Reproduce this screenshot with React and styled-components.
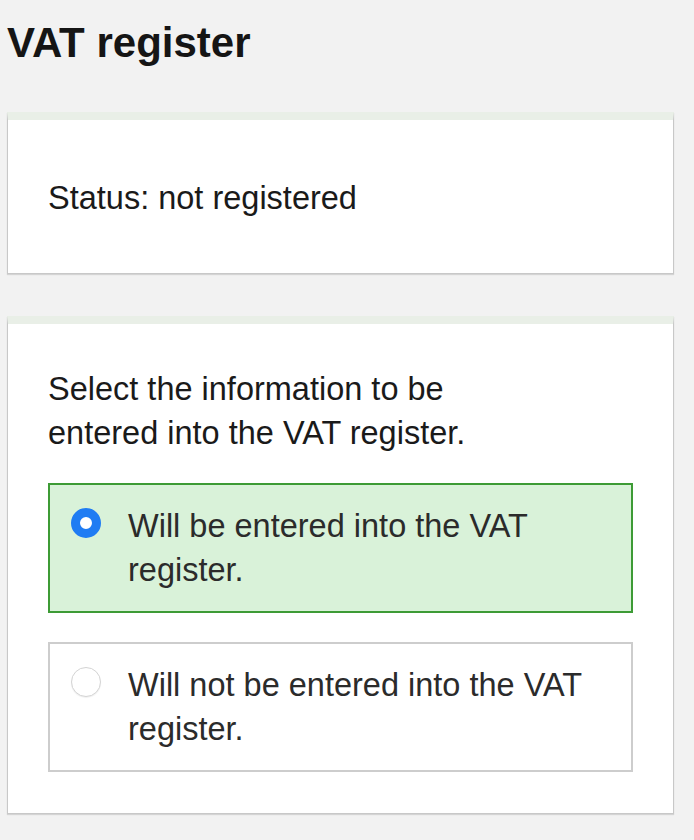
import React, { useState } from 'react';
import styled, { createGlobalStyle } from 'styled-components';

const GlobalStyle = createGlobalStyle`
  html, body {
    margin: 0;
    padding: 0;
    background: #f2f2f2;
  }
  body {
    font-family: 'Liberation Sans', Arial, Helvetica, sans-serif;
    color: #1a1a1a;
  }
`;

const Page = styled.main`
  padding: 19px 7px 25px 7px;
`;

const Title = styled.h1`
  margin: 0 0 45px 0;
  font-size: 42px;
  line-height: 48px;
  font-weight: 700;
  color: #151515;
`;

const Card = styled.section`
  width: 667px;
  box-sizing: border-box;
  background: #ffffff;
  border: 1px solid #c8c8c8;
  border-top: 8px solid #e9efe7;
  box-shadow: 0 1px 1px rgba(0, 0, 0, 0.12);
  padding: ${(p) => p.$padding};
  margin-bottom: 42px;
`;

const Text = styled.p`
  margin: 0;
  font-size: 32.5px;
  line-height: 44px;
  max-width: ${(p) => p.$maxWidth || 'none'};
`;

const Options = styled.div`
  display: flex;
  flex-direction: column;
  gap: 29px;
  margin-top: 28px;
`;

const Option = styled.label`
  display: flex;
  align-items: flex-start;
  gap: 27px;
  padding: 19px 20px 19px 21px;
  border: 2px solid ${(p) => (p.$checked ? '#3d9b35' : '#cdcdcd')};
  background: ${(p) => (p.$checked ? '#d9f2d9' : '#ffffff')};
  cursor: pointer;
`;

const Radio = styled.input.attrs({ type: 'radio' })`
  appearance: none;
  flex: none;
  width: 30px;
  height: 30px;
  margin: 4px 0 0 0;
  border-radius: 50%;
  box-sizing: border-box;
  background: #ffffff;
  border: 1px solid #d4d4d4;
  box-shadow: 0 1px 1px rgba(0, 0, 0, 0.06);
  cursor: pointer;

  &:checked {
    border: 9.5px solid #1f7cf3;
    box-shadow: none;
  }
`;

const OptionText = styled.span`
  font-size: 32.5px;
  line-height: 44px;
  color: #2b2b2b;
`;

const choices = [
  { id: 'yes', label: 'Will be entered into the VAT register.' },
  { id: 'no', label: 'Will not be entered into the VAT register.' },
];

const App = () => {
  const [selected, setSelected] = useState('yes');

  return (
    <Page>
      <GlobalStyle />
      <Title>VAT register</Title>
      <Card $padding="56px 40px 53px 40px">
        <Text>Status: not registered</Text>
      </Card>
      <Card $padding="43px 40px 41px 40px">
        <Text $maxWidth="440px">
          Select the information to be entered into the VAT register.
        </Text>
        <Options>
          {choices.map(({ id, label }) => (
            <Option key={id} $checked={selected === id}>
              <Radio
                name="vat"
                value={id}
                checked={selected === id}
                onChange={() => setSelected(id)}
              />
              <OptionText>{label}</OptionText>
            </Option>
          ))}
        </Options>
      </Card>
    </Page>
  );
};

export default App;
